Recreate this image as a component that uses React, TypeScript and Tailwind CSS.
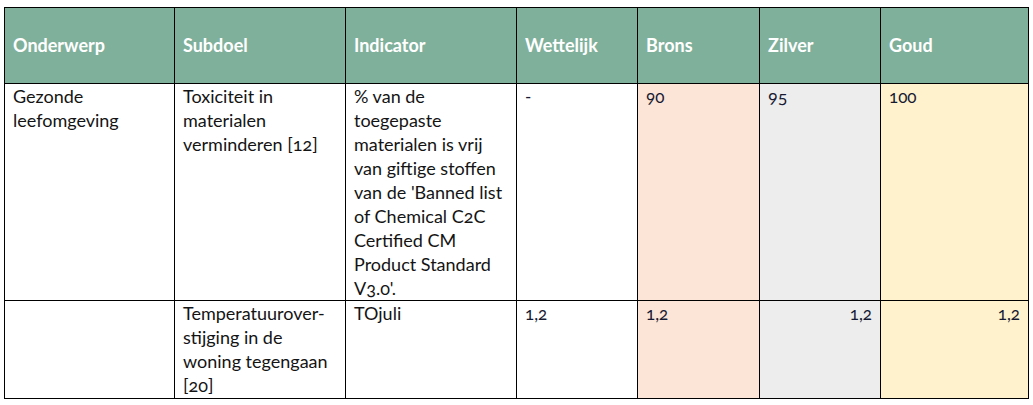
import React from "react";

const font = { fontFamily: "Lato, 'Open Sans', sans-serif" };

export default function App() {
  const th =
    "border border-black bg-[#7fb09b] text-white font-bold text-[18px] text-left align-middle px-2 h-[76px]";
  const td = "border border-black align-top px-2 text-[18px] leading-[24px] text-[#141414]";
  const num = "text-[17px] oldstyle-nums text-[#171a33]";
  return (
    <div className="w-[1033px] h-[405px] bg-white pt-[7px] pl-[4px]" style={font}>
      <table className="border-collapse table-fixed w-[1024px]">
        <colgroup>
          <col className="w-[170px]" />
          <col className="w-[171px]" />
          <col className="w-[171px]" />
          <col className="w-[121px]" />
          <col className="w-[122px]" />
          <col className="w-[121px]" />
          <col className="w-[148px]" />
        </colgroup>
        <thead>
          <tr>
            <th className={th}>Onderwerp</th>
            <th className={th}>Subdoel</th>
            <th className={th}>Indicator</th>
            <th className={th}>Wettelijk</th>
            <th className={th}>Brons</th>
            <th className={th}>Zilver</th>
            <th className={th}>Goud</th>
          </tr>
        </thead>
        <tbody>
          <tr className="h-[217px]">
            <td className={td}>
              Gezonde
              <br />
              leefomgeving
            </td>
            <td className={`${td} oldstyle-nums`}>
              Toxiciteit in
              <br />
              materialen
              <br />
              verminderen [12]
            </td>
            <td className={`${td} oldstyle-nums`}>
              % van de
              <br />
              toegepaste
              <br />
              materialen is vrij
              <br />
              van giftige stoffen
              <br />
              van de 'Banned list
              <br />
              of Chemical C2C
              <br />
              Certified CM
              <br />
              Product Standard
              <br />
              V3.0'.
            </td>
            <td className={td}>
              <span className={num}>-</span>
            </td>
            <td className={`${td} bg-[#fce4d6]`}>
              <span className={num}>90</span>
            </td>
            <td className={`${td} bg-[#ededed]`}>
              <span className={`${num} text-[18px]`}>95</span>
            </td>
            <td className={`${td} bg-[#fff2cc]`}>
              <span className={num}>100</span>
            </td>
          </tr>
          <tr className="h-[98px]">
            <td className={td}></td>
            <td className={`${td} oldstyle-nums`}>
              Temperatuurover-
              <br />
              stijging in de
              <br />
              woning tegengaan
              <br />
              [20]
            </td>
            <td className={td}>TOjuli</td>
            <td className={td}>
              <span className={num}>1,2</span>
            </td>
            <td className={`${td} bg-[#fce4d6]`}>
              <span className={num}>1,2</span>
            </td>
            <td className={`${td} bg-[#ededed] text-right`}>
              <span className={num}>1,2</span>
            </td>
            <td className={`${td} bg-[#fff2cc] text-right`}>
              <span className={num}>1,2</span>
            </td>
          </tr>
        </tbody>
      </table>
    </div>
  );
}
